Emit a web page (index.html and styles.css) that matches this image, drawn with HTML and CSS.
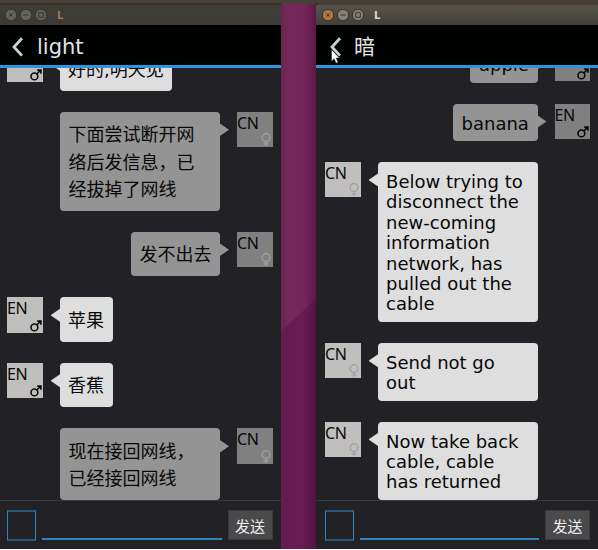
FILE: index.html
```html
<!DOCTYPE html>
<html lang="zh-CN">
<head>
<meta charset="utf-8">
<title>L</title>
<link rel="stylesheet" href="styles.css">
</head>
<body>
<svg class="defs" width="0" height="0" aria-hidden="true">
  <symbol id="male" viewBox="0 0 12 12"><circle cx="4.4" cy="7.4" r="3.4"/><path d="M6.8 5 10.6 1.2M7.2 1.1h3.7v3.7"/></symbol>
  <symbol id="female" viewBox="0 0 10 13"><circle cx="5" cy="4.6" r="3.9"/><path d="M5 8.5V13M2.4 10.9h5.2"/></symbol>
  <symbol id="back" viewBox="0 0 12 20"><path d="M10 1.2 2 10l8 8.6"/></symbol>
  <symbol id="controls" viewBox="0 0 42 12"><circle class="close" cx="6" cy="6" r="5.7"/><circle cx="21" cy="6" r="5.7"/><circle cx="36" cy="6" r="5.7"/><path d="m4.4 4.4 3.2 3.2m0-3.2L4.4 7.6M18.3 6h5.4M33.7 3.7h4.6v4.6h-4.6z"/></symbol>
</svg>
<main class="desktop">
  <section class="window inactive">
    <div class="titlebar"><svg class="controls"><use href="#controls"/></svg><span>L</span></div>
    <header class="header"><svg class="back"><use href="#back"/></svg><h1>light</h1></header>
    <div class="chat cjk">
      <div class="row theirs"><div class="avatar">EN<svg class="male"><use href="#male"/></svg></div><p class="bubble">好的,明天见</p></div>
      <div class="row mine"><p class="bubble">下面尝试断开网络后发信息，已经拔掉了网线</p><div class="avatar">CN<svg class="female"><use href="#female"/></svg></div></div>
      <div class="row mine"><p class="bubble">发不出去</p><div class="avatar">CN<svg class="female"><use href="#female"/></svg></div></div>
      <div class="row theirs"><div class="avatar">EN<svg class="male"><use href="#male"/></svg></div><p class="bubble">苹果</p></div>
      <div class="row theirs"><div class="avatar">EN<svg class="male"><use href="#male"/></svg></div><p class="bubble">香蕉</p></div>
      <div class="row mine"><p class="bubble wide">现在接回网线，<br>已经接回网线</p><div class="avatar">CN<svg class="female"><use href="#female"/></svg></div></div>
    </div>
    <footer class="composer"><div class="box"></div><div class="field"></div><button>发送</button></footer>
  </section>
  <svg class="wallpaper" viewBox="0 0 35 545" preserveAspectRatio="none">
    <defs>
      <linearGradient id="upper"><stop offset="0" stop-color="#6c2454"/><stop offset=".25" stop-color="#75285b"/><stop offset=".7" stop-color="#722556"/><stop offset="1" stop-color="#571a48"/></linearGradient>
      <linearGradient id="lower"><stop offset="0" stop-color="#651b51"/><stop offset=".6" stop-color="#681d55"/><stop offset="1" stop-color="#51163f"/></linearGradient>
    </defs>
    <path fill="url(#upper)" d="M0 0h35v545H0z"/><path fill="url(#lower)" d="M0 327 35 295v250H0z"/>
  </svg>
  <section class="window active">
    <div class="titlebar"><svg class="controls"><use href="#controls"/></svg><span>L</span></div>
    <header class="header"><svg class="back"><use href="#back"/></svg><h1>暗</h1>
      <svg class="cursor" viewBox="0 0 9 15"><path d="M.5.5v11.8l2.7-2.5 1.9 4.4 2-.9-1.9-4.2h3.3z"/></svg></header>
    <div class="chat latin">
      <div class="row mine"><p class="bubble">apple</p><div class="avatar">EN<svg class="male"><use href="#male"/></svg></div></div>
      <div class="row mine"><p class="bubble">banana</p><div class="avatar">EN<svg class="male"><use href="#male"/></svg></div></div>
      <div class="row theirs"><div class="avatar">CN<svg class="female"><use href="#female"/></svg></div><p class="bubble wide">Below trying to<br>disconnect the<br>new-coming<br>information<br>network, has<br>pulled out the<br>cable</p></div>
      <div class="row theirs"><div class="avatar">CN<svg class="female"><use href="#female"/></svg></div><p class="bubble wide">Send not go<br>out</p></div>
      <div class="row theirs"><div class="avatar">CN<svg class="female"><use href="#female"/></svg></div><p class="bubble wide">Now take back<br>cable, cable<br>has returned</p></div>
    </div>
    <footer class="composer"><div class="box"></div><div class="field"></div><button>发送</button></footer>
  </section>
</main>
</body>
</html>
```
FILE: styles.css
```css
* { box-sizing: border-box; }
body { margin: 0; background: #fff; font-family: "DejaVu Sans", "Noto Sans CJK SC", sans-serif; overflow: hidden; }
.defs { position: absolute; }
.desktop { width: 598px; height: 549px; display: grid; grid-template-columns: 281px 35px 282px; background: #484037; padding-top: 3px; }
.wallpaper { width: 35px; height: 545px; margin-top: 1px; display: block; }
.window { display: flex; flex-direction: column; height: 546px; min-width: 0; background: #222126; }
.titlebar { height: 22px; flex: none; display: flex; align-items: center; gap: 10px; padding: 2px 0 0 5px; background: linear-gradient(#2d2b27, #3e3d38 3px, #3b3a36); color: #a07850; font-size: 10px; font-weight: bold; }
.active .titlebar { padding-left: 6px; background: linear-gradient(#38362f, #55534c 3px, #413f39); color: #dfd8ce; border-top-left-radius: 4px; }
.controls { width: 42px; height: 12px; margin-top: -1px; fill: #65635d; stroke: #34332f; stroke-width: 1; }
.active .controls { --close: #b47742; fill: #85807a; }
.close { fill: var(--close, #65635d); }
.header { position: relative; height: 43px; flex: none; display: flex; align-items: center; padding-left: 12px; gap: 13px; background: #000202; border-bottom: 3px solid #2b97e0; color: #e4e4e4; }
.active .header { padding-left: 14px; gap: 12px; }
.header h1 { margin: 4px 0 0; font-size: 21px; line-height: 36px; font-weight: normal; }
.back { width: 12px; height: 20px; margin-top: 3px; fill: none; stroke: #d0d0d0; stroke-width: 2.8; }
.cursor { position: absolute; left: 15px; top: 24px; width: 9px; height: 15px; fill: #fff; stroke: #222; stroke-width: .5; }
.chat { flex: 1; min-height: 0; overflow: hidden; display: flex; flex-direction: column; justify-content: flex-end; gap: 21px; padding: 0 8.5px 0 7px; font-size: 18px; color: #080808; }
.active .chat { padding: 0 8px 0 9px; gap: 20.8px; }
.row { flex: none; display: flex; align-items: flex-start; gap: 17px; }
.mine { justify-content: flex-end; }
.avatar { position: relative; flex: none; width: 35.5px; height: 35.5px; background: #c0bfbd; font-family: "Noto Sans", sans-serif; font-size: 16px; line-height: 23px; letter-spacing: -.3px; }
.mine .avatar { background: #808080; }
.avatar svg { position: absolute; fill: none; }
.male { right: 1px; bottom: 1px; width: 12px; height: 12px; stroke: #080808; stroke-width: 1.6; }
.female { right: 2px; bottom: 1px; width: 10px; height: 13px; stroke: #a0a0a0; stroke-width: 1.3; }
.bubble { position: relative; margin: 0; max-width: 160px; padding: 9.6px 8.6px 7.6px; border-radius: 4px; background: #dedede; line-height: 20.4px; }
.latin .bubble { padding: 10px 8.6px 7.2px; }
.wide { width: 160px; }
.cjk .bubble { line-height: 27.3px; }
.mine .bubble { background: #949494; }
.bubble::before { content: ""; position: absolute; top: 11.5px; left: -9px; width: 9.5px; height: 13px; background: inherit; clip-path: polygon(100% 0, 100% 100%, 0 50%); }
.mine .bubble::before { left: auto; right: -9px; clip-path: polygon(0 0, 0 100%, 100% 50%); }
.composer { height: 49px; flex: none; display: flex; align-items: flex-start; gap: 6px; padding: 9px 8.5px 0 7px; border-top: 1px solid #39393c; }
.active .composer { padding: 9px 8px 0 9px; }
.box { width: 29px; height: 31px; border: 1px solid #3586b9; border-top: 2px solid #265879; border-bottom: 2px solid #265879; }
.field { flex: 1; height: 30px; border-bottom: 2px solid #2f86bd; }
.composer button { width: 45px; height: 30px; padding: 0; border: 1px solid #3a3a3c; background: #4a4a4c; color: #eee; font: 15px "Noto Sans CJK SC", sans-serif; }
```
